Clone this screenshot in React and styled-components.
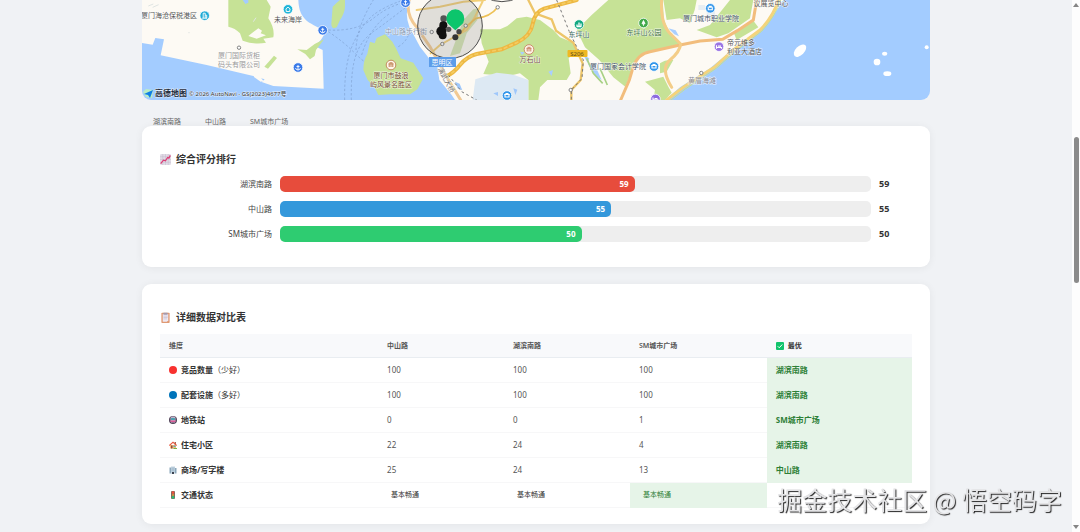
import React from 'react';
import styled, { createGlobalStyle } from 'styled-components';

const GlobalStyle = createGlobalStyle`
  * {
    box-sizing: border-box;
  }

  body {
    margin: 0;
    background: #f0f2f5;
    color: #333;
    font-family: 'Noto Sans', 'Noto Sans CJK SC', sans-serif;
    font-size: 8px;
  }
`;

const StyledShell = styled.div`
  display: grid;
  grid-template-columns: minmax(0, 1fr) 8px;
  min-height: 100vh;
`;

const StyledMain = styled.main`
  width: 100%;
  max-width: 788px;
  margin: 0 auto;
  padding-bottom: 8px;
`;

const StyledMap = styled.svg`
  display: block;
  width: 100%;
  height: 100px;
  border-radius: 0 0 9px 9px;
  background: #a3ccff;
`;

const MapLabel = styled.text`
  font-size: ${({ $size }) => $size || 7}px;
  font-weight: ${({ $bold }) => ($bold ? 700 : 400)};
  fill: ${({ $color }) => $color || '#555'};
  stroke: ${({ $halo }) => $halo || 'rgba(255, 255, 255, 0.7)'};
  stroke-width: 1px;
  paint-order: stroke;
  text-anchor: ${({ $anchor }) => $anchor || 'middle'};
`;

const StyledLegend = styled.ul`
  display: flex;
  gap: 24px;
  height: 26px;
  margin: 0;
  padding: 17px 11px 0;
  list-style: none;
  color: #666;
  font-size: 7px;
  line-height: 9px;
`;

const StyledCard = styled.section`
  position: relative;
  margin-bottom: ${({ $last }) => ($last ? 0 : 17)}px;
  padding: 16px 18px;
  border-radius: 9px;
  background: #fff;
  box-shadow: 0 1px 8px rgba(0, 0, 0, 0.06);
`;

const StyledTitle = styled.h2`
  display: flex;
  align-items: center;
  gap: 5px;
  margin: 0;
  font-size: 10px;
  font-weight: 700;
  line-height: 34px;
`;

const StyledBarRow = styled.div`
  display: grid;
  grid-template-columns: 112px minmax(0, 1fr) 33px;
  align-items: center;
  gap: 8px;
  height: 16px;
  margin-bottom: 9px;
  line-height: 16px;
`;

const StyledBarLabel = styled.span`
  color: #444;
  text-align: right;
`;

const StyledTrack = styled.div`
  height: 16px;
  border-radius: 5px;
  background: #eee;
`;

const StyledFill = styled.div`
  box-sizing: content-box;
  height: 16px;
  padding-right: 6px;
  border-radius: 5px;
  background: ${({ $color }) => $color};
  color: #fff;
  font-weight: 700;
  text-align: right;
`;

const StyledScore = styled.strong`
  font-size: 9px;
`;

const StyledTable = styled.table`
  width: 100%;
  border-collapse: separate;
  border-spacing: 0;
  table-layout: fixed;
  line-height: 12px;
  text-align: left;
`;

const StyledCol = styled.col`
  width: ${({ $width }) => $width};
`;

const StyledHead = styled.th`
  height: 24px;
  padding: 0 9px;
  border-bottom: 1px solid #e9edf1;
  background: #f8f9fb;
  color: #555;
  font-size: 7px;
  font-weight: 600;
`;

const StyledCell = styled.td`
  height: 25px;
  padding: 0 9px;
  border-bottom: 1px solid ${({ $best }) => ($best ? '#e6f4e8' : '#f7f7f8')};
  background: ${({ $best }) => ($best ? '#e6f4e8' : 'transparent')};
  color: ${({ $best }) => ($best ? '#2e8037' : '#555')};
  font-weight: ${({ $strong }) => ($strong ? 700 : 400)};
`;

const StyledIconText = styled.span`
  display: flex;
  align-items: center;
  gap: 4px;
  color: #333;
`;

const StyledBadge = styled.span`
  display: block;
  padding: 0 4px;
  color: ${({ $best }) => ($best ? '#2e8037' : '#333')};
  font-size: 7px;
`;

const StyledRail = styled.div`
  display: flex;
  flex-direction: column;
  align-items: center;
  padding: 3px 0;
  background: #fdfdfd;
`;

const StyledThumb = styled.div`
  width: 5px;
  height: 146px;
  margin: 130px 0 auto;
  border-radius: 3px;
  background: #8b8b8b;
`;

const StyledWatermark = styled.div`
  position: fixed;
  right: 18px;
  bottom: 15px;
  color: #e4e4e6;
  font-family: 'Noto Sans CJK SC', sans-serif;
  font-size: 25px;
  line-height: 36px;
  text-shadow: 1px 1px 1px #222;
  white-space: nowrap;
`;

const scores = [
  { name: '湖滨南路', value: 59, color: '#e74c3c' },
  { name: '中山路', value: 55, color: '#3498db' },
  { name: 'SM城市广场', value: 50, color: '#2ecc71' },
];

const rows = [
  { icon: 'red', name: '竞品数量', note: '（少好）', values: [100, 100, 100], best: '湖滨南路' },
  { icon: 'blue', name: '配套设施', note: '（多好）', values: [100, 100, 100], best: '湖滨南路' },
  { icon: 'metro', name: '地铁站', values: [0, 0, 1], best: 'SM城市广场' },
  { icon: 'house', name: '住宅小区', values: [22, 24, 4], best: '湖滨南路' },
  { icon: 'office', name: '商场/写字楼', values: [25, 24, 13], best: '中山路' },
];

const traffic = ['基本畅通', '基本畅通', '基本畅通'];

const drawings = {
  red: <circle cx="8" cy="8" r="8" fill="#f8312f" />,
  blue: <circle cx="8" cy="8" r="8" fill="#0074ba" />,
  metro: (
    <>
      <circle cx="8" cy="8" r="8" fill="#4f4157" />
      <rect x="3" y="1" width="10" height="12" rx="3" fill="#c3b3c9" />
      <rect x="4" y="4" width="8" height="4" rx="1" fill="#4a9fb0" />
      <path d="M3 9h10v3H3z" fill="#dc5a98" />
      <path d="M5 13l-2 2M11 13l2 2" stroke="#d5cbd8" />
    </>
  ),
  house: (
    <>
      <path d="M2 8h12v7H2z" fill="#f5b87a" />
      <path d="M11 2h3v5h-3z" fill="#a56953" />
      <path d="M0 8L8 1l8 7-1 2-7-6-7 6z" fill="#e8573f" />
      <path d="M4 9h3v6H4z" fill="#8a4b3c" />
      <path d="M9 9h4v3H9z" fill="#5aa9b8" />
      <path d="M9 14h7v2H9z" fill="#7db343" />
    </>
  ),
  office: (
    <>
      <path d="M1 3h4v12H1zM12 4h3v11h-3z" fill="#8ca7bb" />
      <path d="M4 1h8v14H4z" fill="#c4d5e0" />
      <path d="M6 3v8M8 3v8M10 3v8" stroke="#8fabc0" />
      <path d="M6 12h4v4H6z" fill="#3b4250" />
    </>
  ),
  light: (
    <>
      <rect x="4" y="0" width="8" height="16" rx="2" fill="#7d6a5e" />
      <circle cx="8" cy="3.200" r="2.600" fill="#f0503f" />
      <circle cx="8" cy="8" r="2.200" fill="#d9953a" />
      <circle cx="8" cy="12.800" r="2.600" fill="#2bbd78" />
    </>
  ),
  check: (
    <>
      <rect width="16" height="16" rx="2" fill="#12c46c" />
      <path d="M3.500 8.500l3 3 6-6.500" fill="none" stroke="#fff" strokeWidth="2" />
    </>
  ),
  chart: (
    <>
      <rect width="16" height="16" rx="2" fill="#e1dbe6" />
      <path d="M4 0v16M8 0v16M12 0v16M0 4h16M0 8h16M0 12h16" stroke="#bdb3c7" strokeWidth=".6" />
      <path d="M1 14l4-5 3 1 3-5 2 1 2-4" fill="none" stroke="#dc3d76" strokeWidth="1.800" />
    </>
  ),
  board: (
    <>
      <rect x="2" y="1" width="12" height="15" rx="1" fill="#e09a74" />
      <path d="M4 3h8v9l-2 2H4z" fill="#eee9f3" />
      <path d="M5 1h6v3H5z" fill="#a49aae" />
      <path d="M5 6h6M5 8h6M5 10h5" stroke="#b9b2c6" strokeWidth=".8" />
    </>
  ),
};

const Icon = ({ name, size = 8 }) => (
  <svg width={size} height={size} viewBox="0 0 16 16" aria-hidden="true">
    {drawings[name]}
  </svg>
);

const poiGlyphs = {
  anchor: <path d="M0-2.500V2.500M-1.500-1h3M-2.500.5Q-2 2.500 0 2.500T2.500.5" />,
  tower: <path d="M-1.500 2.500v-5h2v5M.5-.5h1.500v3M-2.500 2.500h5" />,
  home: <path d="M-2.500 0L0-2.200 2.500 0M-1.800 0v2.200h3.600V0" />,
  peak: <path d="M-2 2V0M0 2v-4M2 2v-3M-2.500 2h5" strokeWidth="1.300" />,
  tree: <path d="M0-2.500L-1.500.8h3zM0 .8v2" fill="#fff" />,
  cap: <path d="M-2.800-1h5.600M-2-.4V1.500h4V-.4M-1.500-2h3" strokeWidth="1.100" />,
  bed: <path d="M-2.500-1.500v3.500M-2.500.8h5v1.200M-1-.5h3" strokeWidth="1.200" />,
  gate: <path d="M-2.500-1.200h5M-1.800-1v3M0-1v3M1.800-1v3M-1.500-2.200h3" />,
};

const pois = [
  { x: 62.7, y: 15.7, kind: 'tower', color: '#20abd6' },
  { x: 146, y: 9.3, kind: 'home', color: '#20b5d8' },
  { x: 180.7, y: 30.3, kind: 'anchor', color: '#3a7ae8' },
  { x: 156, y: 67.5, kind: 'anchor', color: '#3a7ae8' },
  { x: 263.5, y: 2.7, kind: 'anchor', color: '#3a7ae8' },
  { x: 249, y: 65, kind: 'gate', color: '#b97444', outline: true },
  { x: 387, y: 49.5, kind: 'gate', color: '#c57658', outline: true },
  { x: 437, y: 24.5, kind: 'peak', color: '#12a882' },
  { x: 501.5, y: 23, kind: 'tree', color: '#43aa4b' },
  { x: 512, y: 66.5, kind: 'cap', color: '#3396ea' },
  { x: 365, y: 95.5, kind: 'cap', color: '#3396ea' },
  { x: 568.3, y: 8.3, kind: 'cap', color: '#3396ea' },
  { x: 513.5, y: 99, kind: 'bed', color: '#8d6ce0' },
  { x: 577, y: 46.7, kind: 'bed', color: '#9a74e4' },
];

const Poi = ({ x, y, kind, color, outline }) => (
  <g transform={`translate(${x} ${y})`}>
    <circle r="4.800" fill={outline ? '#fff6ea' : color} stroke={outline ? color : '#fff'} strokeWidth=".8" />
    <g fill="none" stroke={outline ? color : '#fff'} strokeWidth=".9">
      {poiGlyphs[kind]}
    </g>
  </g>
);

const stations = [
  [355.7, 7.3],
  [323.7, 25.7],
  [300.3, 44],
  [289.7, 32],
  [428.7, 90],
  [97, 47.7],
  [559.3, 73],
];

const West = () => (
  <g transform="translate(-2 0) scale(.33333)">
    <path
      d="M0 0H475C476 30 484 48 500 62 518 76 540 82 555 96 548 118 535 128 524 138L548 150 551 266 400 258 365 246 374 238 340 228 200 195 62 166 72 118 46 114 38 134 0 128Z"
      fill="#fdfaf4"
    />
    <path
      d="M265 0V80Q285 84 300 100L308 122Q345 135 378 128L370 116 400 112Q405 85 385 55L392 20 380 0Z"
      fill="#c6e296"
    />
    <path d="M325 108Q345 92 355 85L366 92 362 100 378 106 350 116Z" fill="#fdfaf4" />
    <path d="M308 0h17v8l-9 4Z" fill="#a3ccff" />
    <path d="M472 148L500 150 524 132 552 118 528 150 524 168 510 178 496 162ZM373 200L402 167 411 174 384 206Z" fill="#c6e296" />
    <path d="M615 0V20Q614 40 600 60L590 82Q575 90 574 72L578 20Q590 8 600 0Z" fill="#c6e296" />
    <path
      d="M670 210Q670 180 682 162L690 125 704 130 710 114 735 103 757 125 768 145 782 175 820 188 850 235 832 268 810 283H750L715 285 704 262 683 240Z"
      fill="#c6e296"
    />
    <path d="M340 210l10 5 20 28-8 2-20-14Z" fill="#fdfaf4" />
    <path d="M25 18l15-6M38 22l18-8M340 65l8-12M145 98h4" stroke="#dfe4e2" strokeWidth="3" />
    <g fill="none" stroke="#7d9fce" strokeWidth="2" strokeDasharray="7 6">
      <path d="M565 90Q650 95 700 55T795 8" />
      <path d="M565 95Q610 125 640 155T675 185" />
      <path d="M614 300Q612 190 640 130T700 45 790 0" />
      <path d="M634 300Q632 210 648 165T700 95 800 20" />
      <path d="M648 150Q650 80 700 0M665 165Q690 80 750 40" />
      <path d="M775 140Q810 120 812 70" />
    </g>
  </g>
);

const East = () => (
  <g transform="translate(258 0) scale(.33333)">
    <path
      d="M30 0Q12 40 28 80L60 140 88 176 112 200 118 240 155 285 165 300H795L840 262 930 205 990 155 1080 90Q1120 50 1150 0Z"
      fill="#fdfaf4"
    />
    <path
      d="M240 88H300L322 78 350 55 380 50 420 60 460 90 480 112 520 128 532 150 506 175 512 220 500 240 442 240 420 262 415 300H385V240L360 220 325 228 300 245 282 225 250 222 266 185 245 130Z"
      fill="#c6e296"
    />
    <path d="M625 0L575 45 530 90 555 142 598 180 640 232 676 260 700 200 728 160 840 132 810 100 792 60 788 0Z" fill="#c6e296" />
    <path d="M790 0H890L884 30 870 70 840 55 800 60ZM990 0H1060L1050 55 985 100 950 112 890 90 930 75Z" fill="#c6e296" />
    <path d="M735 245L790 230 805 260 815 278 795 300H760L765 270ZM780 190Q795 178 820 180L800 215 780 220ZM1000 95L1060 62 1075 82 1010 120Z" fill="#c6e296" />
    <path d="M150 168L190 60 220 28 238 25 232 60 200 100 180 160Z" fill="#d5e6b4" />
    <path d="M226 238L290 218 340 224 385 240V300H218Z" fill="#dde9f3" />
    <path d="M550 165l18 10-6 15 25 10 18 40-12-8-18-20-14-26ZM805 85l22 6 10 18-14-6ZM445 215l14-5-4 18ZM360 155l14 2-8 8Z" fill="#a9cfff" />
    <path d="M560 175l20 45 28 30M600 205l22 50" fill="none" stroke="#a8d186" strokeWidth="5" />
    <path d="M340 265l12 4-6 16ZM280 280l14-4v12ZM165 245l14 6 8 20-14-6Z" fill="#9ec7fb" />
    <path d="M895 15h20v15h-20ZM920 28h25v20h-25Z" fill="#e6edf2" />

    <g fill="none" strokeLinecap="round">
      <path d="M28 0Q15 40 50 82L90 140 138 228 182 300" stroke="#f1c993" strokeWidth="9" />
      <path d="M50 30L120 20 190 5 255 0M250 0L225 50 200 90 120 135 92 160" stroke="#f2cf78" strokeWidth="6" />
      <path d="M293 22Q270 52 228 55L200 78 165 118" stroke="#eec156" strokeWidth="5" />
      <path d="M385 0L405 40 455 58 468 92 520 128 548 190 542 240 514 270V300" stroke="#edc569" strokeWidth="7" />
      <path d="M140 228Q160 220 180 195T230 162L305 148 350 128Q392 108 398 72T432 26L530 0" stroke="#edb842" strokeWidth="12" />
      <path d="M140 228Q160 220 180 195T230 162L305 148 350 128Q392 108 398 72T432 26L530 0" stroke="#f5cc62" strokeWidth="5" strokeDasharray="8 10" />
      <path d="M662 300L688 240 700 200Q715 160 750 155L840 135 900 123 968 118 1012 92 1060 60 1070 0" stroke="#f2bd7c" strokeWidth="9" />
      <path d="M785 0Q780 75 815 105L842 132Q840 155 810 180T815 262" stroke="#f4cd88" strokeWidth="9" />
      <path d="M800 300L850 262 945 200 1000 150 1080 90Q1120 50 1135 0" stroke="#f4d47b" strokeWidth="9" />
      <path d="M806 305L856 267 950 204 1006 154 1085 94Q1126 50 1142 0" stroke="#c5df91" strokeWidth="3" />
    </g>
    <g fill="none" stroke="#777" strokeWidth="3" strokeDasharray="8 8">
      <path d="M470 0L510 100 550 180 546 235 514 270V300" />
      <path d="M145 225L185 275 230 300" />
    </g>
    <g transform="translate(780 0)" fill="#fff">
      <ellipse cx="420" cy="152" rx="23" ry="13" transform="rotate(-45 420 152)" />
      <circle cx="651" cy="186" r="10" />
      <ellipse cx="674" cy="161" rx="8" ry="6" />
      <ellipse cx="682" cy="221" rx="12" ry="7" />
      <circle cx="800" cy="142" r="6" />
    </g>
  </g>
);

const SearchArea = () => (
  <g transform="translate(258 0) scale(.33333)">
    <circle cx="150" cy="78" r="97" fill="rgba(125, 125, 125, .22)" stroke="#4a4a4a" strokeWidth="3" />
    <path d="M255-8Q305 18 358-8" fill="none" stroke="#4a4a4a" strokeWidth="3" />
    <g fill="#111">
      <circle cx="131" cy="56" r="10" fill="#555" />
      <circle cx="130" cy="76" r="12" />
      <circle cx="124" cy="94" r="15" />
      <circle cx="128" cy="106" r="12" />
      <circle cx="146" cy="88" r="8" fill="#555" />
      <circle cx="177" cy="95" r="8" fill="#444" />
      <circle cx="166" cy="112" r="9" fill="#333" />
    </g>
    <path d="M166 91L149 76A27 27 0 1 1 183 76Z" fill="#0cc56c" />
  </g>
);

const CityMap = () => (
  <StyledMap viewBox="0 0 788 100" preserveAspectRatio="xMidYMin slice" role="img">
    <West />
    <East />
    <MapLabel x="264" y="34" $color="#8b98ad">中山路步行街</MapLabel>
    <MapLabel transform="translate(302 81) rotate(62)" $color="#777">演武大桥</MapLabel>
    {stations.map(([cx, cy]) => (
      <circle key={cx} cx={cx} cy={cy} r="1.700" fill="#fff" stroke="#777" strokeWidth=".9" />
    ))}
    <SearchArea />
    {pois.map(poi => (
      <Poi key={`${poi.x}-${poi.y}`} {...poi} />
    ))}

    <MapLabel x="55" y="18" $anchor="end">厦门海沧保税港区</MapLabel>
    <MapLabel x="146" y="22">未来海岸</MapLabel>
    <MapLabel x="97" y="58" $color="#999">厦门国际货柜</MapLabel>
    <MapLabel x="97" y="67" $color="#999">码头有限公司</MapLabel>
    <MapLabel x="249" y="78" $color="#754c32">厦门市鼓浪</MapLabel>
    <MapLabel x="249" y="87" $color="#754c32">屿风景名胜区</MapLabel>
    <MapLabel x="388" y="62" $color="#754c42">万石山</MapLabel>
    <MapLabel x="437" y="37" $color="#3d6b5c">东坪山</MapLabel>
    <MapLabel x="502" y="35" $color="#3f7145">东坪山公园</MapLabel>
    <MapLabel x="476" y="69" $color="#48566a">厦门国家会计学院</MapLabel>
    <MapLabel x="569" y="21" $color="#48566a">厦门城市职业学院</MapLabel>
    <MapLabel x="629" y="6">议展览中心</MapLabel>
    <MapLabel x="585" y="45" $anchor="start">帝元维多</MapLabel>
    <MapLabel x="585" y="54" $anchor="start">利亚大酒店</MapLabel>
    <MapLabel x="560" y="83" $color="#8a8a92">黄厝海滩</MapLabel>

    <rect x="287" y="57" width="27" height="10" fill="#5c9dea" />
    <MapLabel x="300" y="65" $color="#fff" $halo="none">思明区</MapLabel>
    <rect x="425.500" y="50" width="20" height="7" rx="1" fill="#efb822" />
    <MapLabel x="435" y="56" $size="6" $color="#5e4a16" $halo="none">S206</MapLabel>

    <path d="M1 92l3-3 7 1-1 8-6-1Z" fill="#b9edc4" />
    <path d="M2 94l9-4-3 8-2-3Z" fill="#0d7fe6" />
    <MapLabel x="13" y="96" $anchor="start" $size="8" $bold $color="#1d2a3a">高德地图</MapLabel>
    <MapLabel x="47" y="96" $anchor="start" $size="6" $color="#333">
      © 2026 AutoNavi - GS(2023)4677号
    </MapLabel>
  </StyledMap>
);

const Ranking = () => (
  <StyledCard>
    <StyledTitle>
      <Icon name="chart" size={11} />
      综合评分排行
    </StyledTitle>
    {scores.map(({ name, value, color }) => (
      <StyledBarRow key={name}>
        <StyledBarLabel>{name}</StyledBarLabel>
        <StyledTrack>
          <StyledFill $color={color} style={{ width: `${value}%` }}>
            {value}
          </StyledFill>
        </StyledTrack>
        <StyledScore>{value}</StyledScore>
      </StyledBarRow>
    ))}
  </StyledCard>
);

const Comparison = () => (
  <StyledCard $last>
    <StyledTitle>
      <Icon name="board" size={11} />
      详细数据对比表
    </StyledTitle>
    <StyledTable>
      <colgroup>
        <StyledCol $width="29%" />
        <StyledCol $width="16.75%" />
        <StyledCol $width="16.75%" />
        <StyledCol $width="18.2%" />
        <StyledCol />
      </colgroup>
      <thead>
        <tr>
          <StyledHead>维度</StyledHead>
          <StyledHead>中山路</StyledHead>
          <StyledHead>湖滨南路</StyledHead>
          <StyledHead>SM城市广场</StyledHead>
          <StyledHead>
            <StyledIconText>
              <Icon name="check" />
              最优
            </StyledIconText>
          </StyledHead>
        </tr>
      </thead>
      <tbody>
        {rows.map(({ icon, name, note, values, best }) => (
          <tr key={name}>
            <StyledCell>
              <StyledIconText>
                <Icon name={icon} />
                <span>
                  <strong>{name}</strong>
                  {note}
                </span>
              </StyledIconText>
            </StyledCell>
            {values.map((value, i) => (
              <StyledCell key={i}>{value}</StyledCell>
            ))}
            <StyledCell $best $strong>
              {best}
            </StyledCell>
          </tr>
        ))}
        <tr>
          <StyledCell>
            <StyledIconText>
              <Icon name="light" />
              <strong>交通状态</strong>
            </StyledIconText>
          </StyledCell>
          {traffic.map((state, i) => (
            <StyledCell key={i} $best={i === 2}>
              <StyledBadge $best={i === 2}>{state}</StyledBadge>
            </StyledCell>
          ))}
          <StyledCell />
        </tr>
      </tbody>
    </StyledTable>
  </StyledCard>
);

const App = () => (
  <>
    <GlobalStyle />
    <StyledShell>
      <StyledMain>
        <CityMap />
        <StyledLegend>
          {scores.map(({ name }) => (
            <li key={name}>{name}</li>
          ))}
        </StyledLegend>
        <Ranking />
        <Comparison />
      </StyledMain>
      <StyledRail aria-hidden="true">
        <svg width="6" height="4" viewBox="0 0 6 4">
          <path d="M3 0l3 4H0z" fill="#858585" />
        </svg>
        <StyledThumb />
        <svg width="6" height="4" viewBox="0 0 6 4">
          <path d="M3 4L0 0h6z" fill="#858585" />
        </svg>
      </StyledRail>
    </StyledShell>
    <StyledWatermark>掘金技术社区 @ 悟空码字</StyledWatermark>
  </>
);

export default App;
